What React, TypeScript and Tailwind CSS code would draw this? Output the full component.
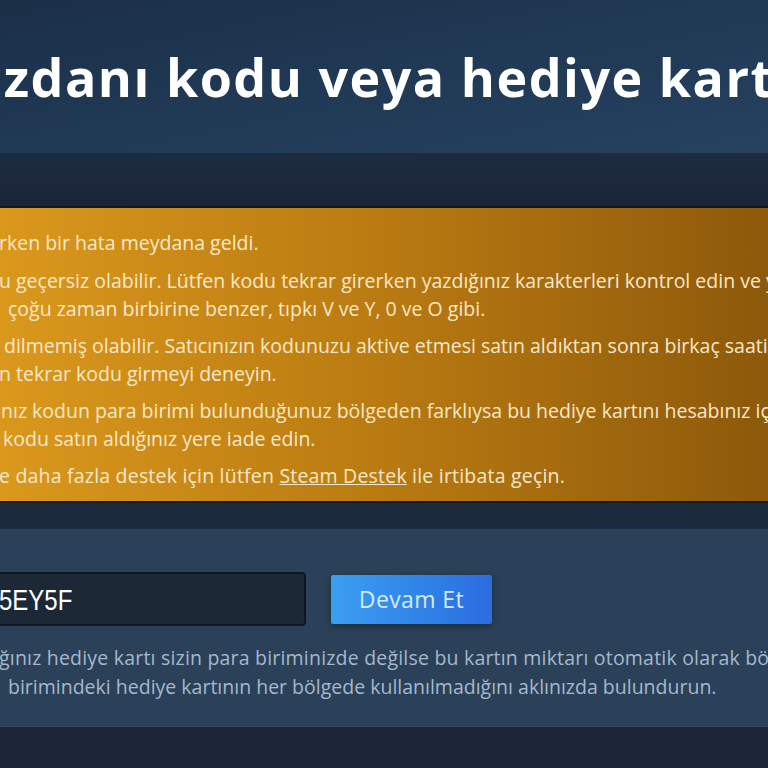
export default function App() {
  const body = { fontFamily: '"Open Sans", "Liberation Sans", Arial, sans-serif' };

  return (
    <div className="w-[768px] h-[768px] overflow-hidden bg-[#1b2535]" style={body}>
      {/* header */}
      <div className="h-[153px] bg-gradient-to-br from-[#1b2f47] via-[#203955] to-[#25425f] flex items-center overflow-hidden">
        <h1 className="whitespace-nowrap -ml-[32px] text-[52px] font-bold text-white tracking-[1.5px]">
          üzdanı kodu veya hediye kartı kullan
        </h1>
      </div>

      {/* dark band */}
      <div className="h-[55px] bg-gradient-to-b from-[#1c2c40] to-[#1a2637] border-b-2 border-[#12161c]" />

      {/* warning box */}
      <div className="h-[295px] bg-gradient-to-r from-[#da981c] via-[#b97a11] to-[#8d590a] border-b-2 border-[#14181d] overflow-hidden text-[19.5px] text-[#fbe8c8] whitespace-nowrap">
        <div className="pt-[21px] flex flex-col">
          <p className="leading-[28px] -ml-[1px]">rken bir hata meydana geldi.</p>
          <div className="mt-[10px] leading-[28px]">
            <p className="-ml-[1px]">u geçersiz olabilir. Lütfen kodu tekrar girerken yazdığınız karakterleri kontrol edin ve yeniden</p>
            <p className="ml-[8px]">çoğu zaman birbirine benzer, tıpkı V ve Y, 0 ve O gibi.</p>
          </div>
          <div className="mt-[9px] leading-[28px]">
            <p className="ml-[4px]">dilmemiş olabilir. Satıcınızın kodunuzu aktive etmesi satın aldıktan sonra birkaç saati</p>
            <p className="-ml-[1px]">n tekrar kodu girmeyi deneyin.</p>
          </div>
          <div className="mt-[9px] leading-[28px]">
            <p className="ml-[1px]">nız kodun para birimi bulunduğunuz bölgeden farklıysa bu hediye kartını hesabınız için</p>
            <p className="ml-[3px]">kodu satın aldığınız yere iade edin.</p>
          </div>
          <p className="mt-[9px] leading-[28px] -ml-[1px] tracking-[0.2px]">
            e daha fazla destek için lütfen <span className="underline">Steam Destek</span> ile irtibata geçin.
          </p>
        </div>
      </div>

      {/* spacer band */}
      <div className="h-[26px] bg-[#1b2a3d]" />

      {/* code entry panel */}
      <div className="h-[198px] bg-[#2a4159] border-b border-[#30485f] overflow-hidden">
        <div className="pt-[43px] flex items-center gap-[25px] -ml-[40px]">
          <div className="w-[346px] h-[54px] bg-[#1c2836] border-2 border-[#0e1620] rounded-[4px] flex items-center pl-[37px] overflow-hidden">
            <span
              className="inline-block origin-left scale-x-[0.8] text-[30px] text-white whitespace-nowrap"
              style={{ fontFamily: '"Liberation Sans", Arial, sans-serif' }}
            >
              5EY5F
            </span>
          </div>
          <button className="w-[161px] h-[49px] rounded-[2px] bg-gradient-to-r from-[#3b9ff0] to-[#2b6cdf] text-[23px] font-medium tracking-[0.4px] text-[#d3eaff] shadow-[0_2px_6px_rgba(0,0,0,0.35)]">
            Devam Et
          </button>
        </div>
        <div className="mt-[17px] text-[19.5px] leading-[29px] text-[#a7b8ca] whitespace-nowrap">
          <p className="-ml-[1px] tracking-[0.2px]">ğınız hediye kartı sizin para biriminizde değilse bu kartın miktarı otomatik olarak bölgenize</p>
          <p className="ml-[8px]">birimindeki hediye kartının her bölgede kullanılmadığını aklınızda bulundurun.</p>
        </div>
      </div>
    </div>
  );
}
